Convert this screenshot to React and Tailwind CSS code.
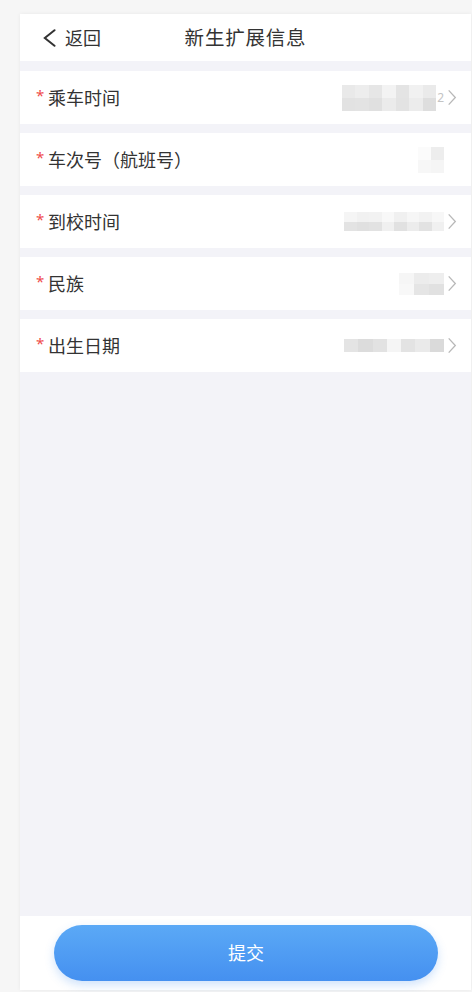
import React from 'react';

const FONT = '[font-family:"Noto_Sans","Noto_Sans_CJK_SC",sans-serif]';

const fields = [
  {
    label: '乘车时间',
    cellClass: 'w-[13.5px] h-[13px]',
    cells: [
      ['bg-[#e9e9e9]', 'bg-[#ededed]', 'bg-[#e6e6e6]', 'bg-[#f3f3f3]', 'bg-[#e4e4e4]', 'bg-[#f1f1f1]', 'bg-[#eaeaea]'],
      ['bg-[#e2e2e2]', 'bg-[#e3e3e3]', 'bg-[#e0e0e0]', 'bg-[#ebebeb]', 'bg-[#e3e3e3]', 'bg-[#ececec]', 'bg-[#dedede]'],
    ],
    tail: '2',
  },
  {
    label: '车次号（航班号）',
    cellClass: 'w-[13px] h-[13px]',
    cells: [
      ['bg-[#fbfbfb]', 'bg-[#ededed]'],
      ['bg-[#f7f7f7]', 'bg-[#f5f5f5]'],
    ],
    noArrow: true,
  },
  {
    label: '到校时间',
    cellClass: 'w-[12.5px] h-[9.5px]',
    cells: [
      ['bg-[#f5f5f5]', 'bg-[#f1f1f1]', 'bg-[#f2f2f2]', 'bg-[#f8f8f8]', 'bg-[#f0f0f0]', 'bg-[#f6f6f6]', 'bg-[#f2f2f2]', 'bg-[#f7f7f7]'],
      ['bg-[#e3e3e3]', 'bg-[#e0e0e0]', 'bg-[#e2e2e2]', 'bg-[#f0f0f0]', 'bg-[#e1e1e1]', 'bg-[#ececec]', 'bg-[#e2e2e2]', 'bg-[#f0f0f0]'],
    ],
  },
  {
    label: '民族',
    cellClass: 'w-[15px] h-[11px]',
    cells: [
      ['bg-[#f6f6f6]', 'bg-[#ececec]', 'bg-[#eeeeee]'],
      ['bg-[#f8f8f8]', 'bg-[#e5e5e5]', 'bg-[#e1e1e1]'],
    ],
  },
  {
    label: '出生日期',
    cellClass: 'w-[14.3px] h-[13px]',
    cells: [
      ['bg-[#e4e4e4]', 'bg-[#dcdcdc]', 'bg-[#e2e2e2]', 'bg-[#f5f5f5]', 'bg-[#e3e3e3]', 'bg-[#eaeaea]', 'bg-[#dadada]'],
    ],
  },
];

const Chevron = ({ className, width = 1.4 }) => (
  <svg viewBox="0 0 10 18" className={className} fill="none" stroke="currentColor" strokeWidth={width}>
    <path d="M1.5 1.5 L8.5 9 L1.5 16.5" />
  </svg>
);

const BackIcon = () => (
  <svg viewBox="0 0 13 18" className="w-[13px] h-[18px] text-[#333333]" fill="none" stroke="currentColor" strokeWidth="2" strokeLinecap="round">
    <path d="M11.5 1.2 L1.8 9 L11.5 16.8" />
  </svg>
);

const Mosaic = ({ cells, cellClass }) => (
  <div className="flex flex-col">
    {cells.map((row, i) => (
      <div key={i} className="flex">
        {row.map((c, j) => (
          <div key={j} className={`${cellClass} ${c}`} />
        ))}
      </div>
    ))}
  </div>
);

const FieldRow = ({ field }) => (
  <div className="h-[53px] bg-white flex items-center pl-[16px] pr-[14px]">
    <span className="text-[#ef4b4b] text-[15px] w-[12px] leading-none -mt-1">*</span>
    <span className="text-[18px] text-[#333333] leading-none">{field.label}</span>
    <div className="ml-auto flex items-center gap-[1px]">
      <Mosaic cells={field.cells} cellClass={field.cellClass} />
      {field.tail && <span className="text-[12px] text-[#c4c4c4] leading-none">{field.tail}</span>}
      <Chevron className={`w-[10px] h-[17px] ml-[2px] ${field.noArrow ? 'text-transparent' : 'text-[#b8b8b8]'}`} />
    </div>
  </div>
);

export default function App() {
  return (
    <div className={`min-h-screen bg-[#f6f6f6] pt-[14px] pl-[20px] pr-px pb-[2px] ${FONT}`}>
      <div className="h-[976px] flex flex-col bg-white shadow-[0_0_4px_rgba(0,0,0,0.06)]">
        {/* header */}
        <div className="h-[47px] shrink-0 grid grid-cols-[1fr_auto_1fr] items-center">
          <div className="flex items-center pl-[23px]">
            <BackIcon />
            <span className="ml-[9px] text-[18px] text-[#333333] leading-none">返回</span>
          </div>
          <h1 className="text-[19.5px] text-[#333333] leading-none tracking-[0.8px]">新生扩展信息</h1>
          <div />
        </div>

        {/* fields */}
        <div className="flex-1 bg-[#f3f3f8] pt-[10px] flex flex-col gap-[9px]">
          {fields.map((f) => (
            <FieldRow key={f.label} field={f} />
          ))}
        </div>

        {/* footer */}
        <div className="h-[74px] shrink-0 bg-white pl-[34px] pr-[33px] pt-[9px]">
          <button className="w-full h-[56px] rounded-full bg-gradient-to-b from-[#5ba9f6] to-[#4590f0] text-white text-[18px] shadow-[0_4px_10px_rgba(69,144,240,0.25)]">
            提交
          </button>
        </div>
      </div>
    </div>
  );
}
